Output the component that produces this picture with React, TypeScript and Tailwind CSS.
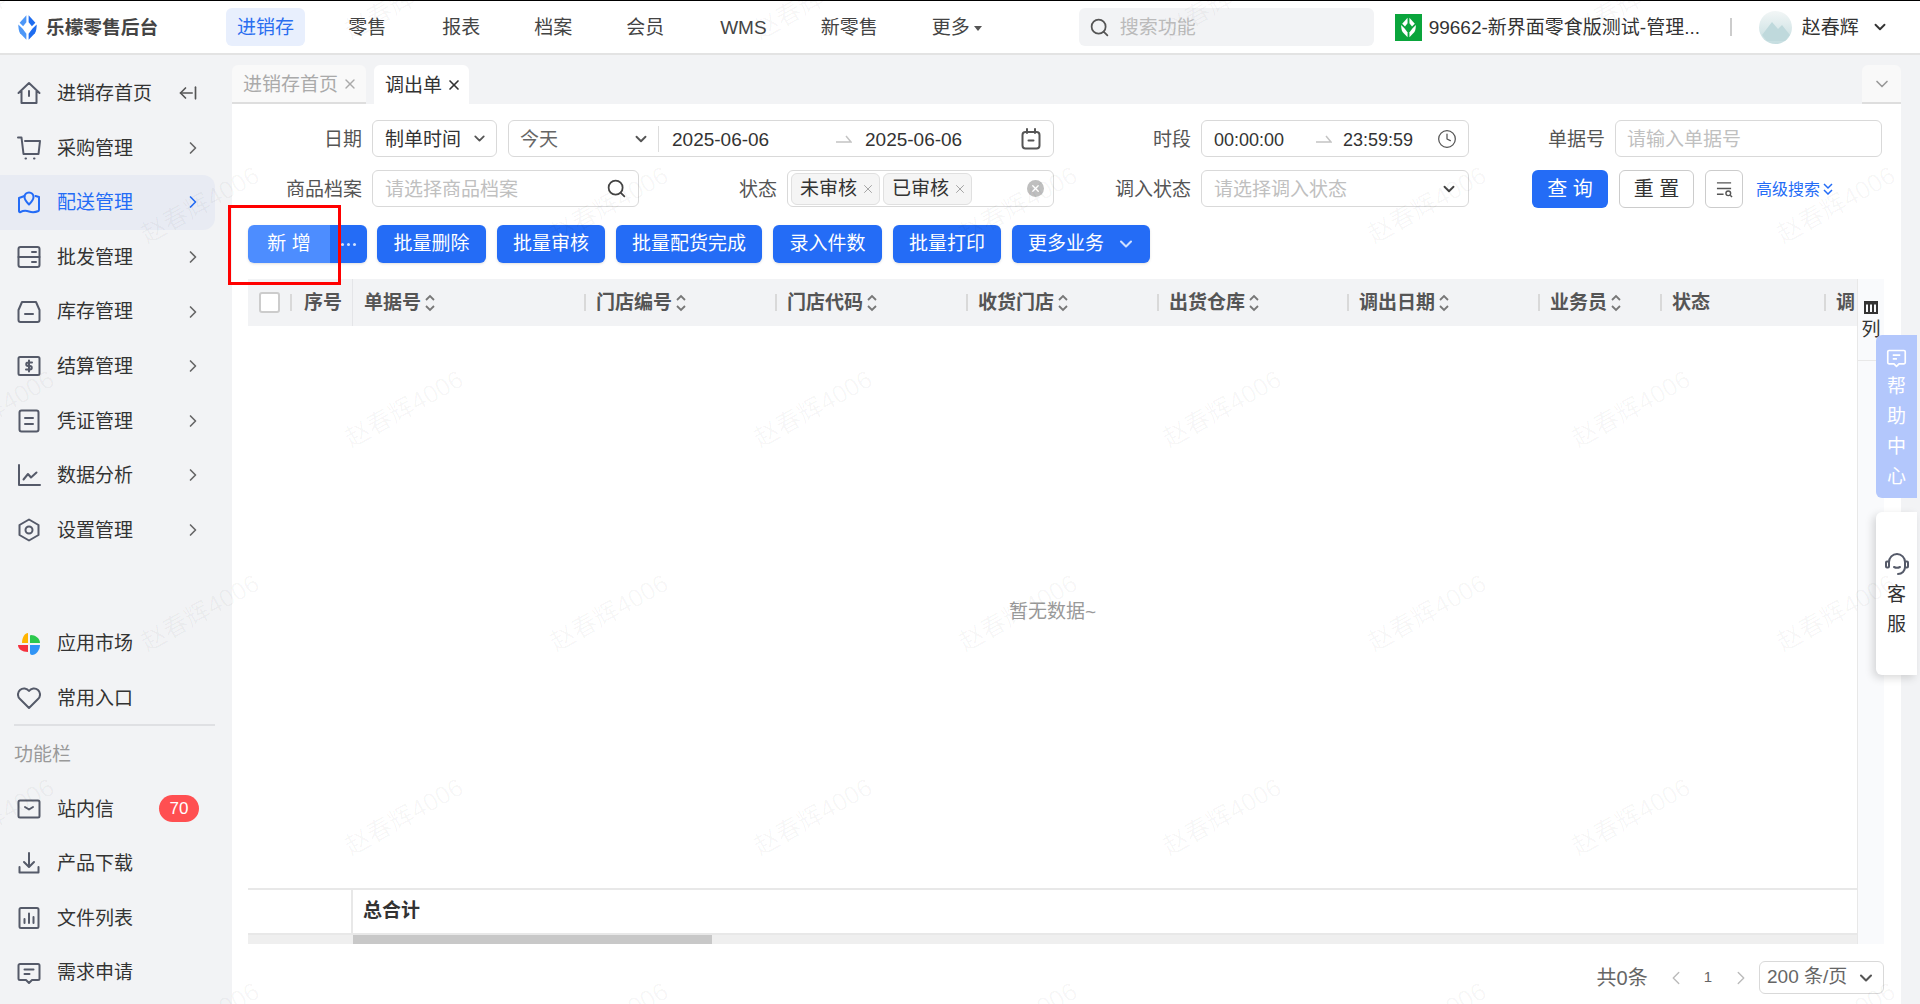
import { ReactNode } from "react";
import { ArrowLeftFromLine, ChevronDown, ChevronRight, ChevronLeft, Clock, Search, X } from "lucide-react";

const sw = { fill: "none", stroke: "currentColor", strokeWidth: 2, strokeLinecap: "round", strokeLinejoin: "round" } as const;

const Ic = ({ children, cls = "w-6 h-6" }: { children: ReactNode; cls?: string }) => (
    <svg viewBox="0 0 24 24" className={cls} {...sw}>{children}</svg>
);

const menuTop = [
    { t: "采购管理", i: <Ic><path d="M1 1.500h3.500L6.500 18h15L23 5H8" /><path d="M8.500 22.500h.5M17 22.500h.5" /></Ic> },
    { t: "配送管理", active: true, i: <Ic><path d="M7.500 6 2 8v13c0 1 .500 1.500 1.500 1 3-1.500 5.500-1.500 8.500-.500s6 1 9.500-.500c.500-.500.500-1 .500-1.500V7l-3.500-1" /><path d="M12 14.500c-3-3-4.500-5-4.500-7.500a4.500 4.500 0 0 1 9 0c0 2.500-1.500 4.500-4.500 7.500Z" /></Ic> },
    { t: "批发管理", i: <Ic><rect x="1.500" y="2" width="21" height="20" rx="2" /><path d="M1.500 12h21M15 7h4M15 17h4" /></Ic> },
    { t: "库存管理", i: <Ic><path d="M5 2h14l3.500 8v10a2 2 0 0 1-2 2h-17a2 2 0 0 1-2-2V10Z" /><path d="M8 14h8" /></Ic> },
    { t: "结算管理", i: <Ic><rect x="1.500" y="3" width="21" height="18" rx="1.500" /><path d="M15 8.500h-4a1.700 1.700 0 0 0 0 3.500h2a1.700 1.700 0 0 1 0 3.500H9M12 6.500v11" /></Ic> },
    { t: "凭证管理", i: <Ic><rect x="2.500" y="1.500" width="19" height="21" rx="2" /><path d="M8 9h8M8 15h8" /></Ic> },
    { t: "数据分析", i: <Ic><path d="M2 2v20h21" /><path d="M6.500 16.500 11 11l3 3.500 5.500-5" /></Ic> },
    { t: "设置管理", i: <Ic><path d="M12 1.500 21.500 7v10L12 22.500 2.500 17V7Z" /><circle cx="12" cy="12" r="3.500" /></Ic> },
];

const menuTools = [
    { t: "站内信", i: <Ic><rect x="1.500" y="3.500" width="21" height="17" rx="1.500" /><path d="m8 10 4 2.500 4-2.500" /></Ic> },
    { t: "产品下载", i: <Ic><path d="M12 2v13M7 11l5 5 5-5M2.500 16v5.500h19V16" /></Ic> },
    { t: "文件列表", i: <Ic><rect x="2.500" y="2" width="19" height="20" rx="1.500" /><path d="M7.500 17v-4M12 17V7.500M16.500 17v-6" /></Ic> },
    { t: "需求申请", i: <Ic><path d="M3 3h18a1.500 1.500 0 0 1 1.500 1.500v13A1.500 1.500 0 0 1 21 19h-6l-3 3-3-3H3a1.500 1.500 0 0 1-1.500-1.500v-13A1.500 1.500 0 0 1 3 3Z" /><path d="M7.500 8.500h9M7.500 13h5" /></Ic> },
];

const cols = [
    { t: "门店编号", w: "w-[191px]", s: true },
    { t: "门店代码", w: "w-[191px]", s: true },
    { t: "收货门店", w: "w-[191px]", s: true },
    { t: "出货仓库", w: "w-[190px]", s: true },
    { t: "调出日期", w: "w-[191px]", s: true },
    { t: "业务员", w: "w-[122px]", s: true },
    { t: "状态", w: "w-[164px]", s: false },
    { t: "调", w: "w-[32px]", s: false },
];

const MenuRow = ({ t, i, active, children }: { t: string; i: ReactNode; active?: boolean; children?: ReactNode }) => (
    <div className={`h-[54.6px] w-[215px] flex items-center pl-[17px] rounded-r-xl ${active ? "bg-[#e8ebf3] text-[#246cf6]" : "text-[#333]"}`}>
        <span className={active ? "text-[#246cf6]" : "text-[#555a69]"}>{i}</span>
        <span className="ml-[16px] pt-[2px] text-[19px] w-[126px] whitespace-nowrap">{t}</span>
        {children}
    </div>
);

const Sort = () => (
    <svg viewBox="0 0 10 18" className="w-[10px] h-[18px] ml-[4px] text-[#777]" fill="none" stroke="currentColor" strokeWidth="1.800">
        <path d="m1 6 4-4 4 4M1 12l4 4 4-4" />
    </svg>
);

const RangeArrow = () => (
    <svg viewBox="0 0 16 8" className="w-[16px] h-[8px] text-[#c4c4c4]" fill="none" stroke="currentColor" strokeWidth="1.500">
        <path d="M0 7h15L10 1" />
    </svg>
);

const Field = ({ w, children }: { w: string; children: ReactNode }) => (
    <div className={`${w} h-[37px] border border-[#d9d9d9] rounded-md flex items-center bg-white text-[19px] text-[#333] relative [&>span]:pt-[3px]`}>{children}</div>
);

const Label = ({ w, children }: { w: string; children: ReactNode }) => (
    <div className={`${w} text-right text-[19px] text-[#555] leading-[37px] pt-[1px] mr-[10px] whitespace-nowrap`}>{children}</div>
);

const Btn = ({ t, w }: { t: string; w: string }) => (
    <button className={`${w} h-[38px] pt-[1px] rounded-md bg-[#246cf6] text-white text-[19px] flex items-center justify-center whitespace-nowrap shadow-sm`}>{t}</button>
);

const Tag = ({ t }: { t: string }) => (
    <div className="w-[89px] h-[32px] bg-[#f5f5f5] border border-[#e0e0e0] rounded-md flex items-center pl-[8px] text-[19px] text-[#333] mr-[3px]">
        <span className="pt-[2px]">{t}</span>
        <X className="w-[14px] h-[14px] ml-[4px] text-[#999]" strokeWidth={1.500} />
    </div>
);

const Petals = ({ left, right }: { left: string; right: string }) => (
    <>
        <path d="M10.700 1 3 9.500 7 13.500 10.700 9Z" fill={left} />
        <path d="M13.300 1 21 9.500 17 13.500 13.300 9Z" fill={right} />
        <path d="M1.500 11.500 6.500 16.500 10.700 22V29L3.500 21.500C2 19 1.500 15 1.500 11.500Z" fill={left} />
        <path d="M22.500 11.500 17.500 16.500 13.300 22V29L20.500 21.500C22 19 22.500 15 22.500 11.500Z" fill={right} />
    </>
);

const marks = [-1, 0, 1, 2, 3, 4, 5].flatMap((r) =>
    [0, 1, 2, 3, 4, 5].map((c) => ({ x: (r % 2 === 0 ? 200 : 404) - 409 + c * 409, y: 205 + r * 204 }))
);

export default function App() {
    return (
        <div className="w-[1920px] h-[1004px] overflow-hidden relative bg-[#f2f3f5] font-['Liberation_Sans','Noto_Sans_CJK_SC',sans-serif]">
            <header className="h-[55px] bg-white border-t border-t-black border-b-2 border-b-[#e3e3e3] flex items-center">
                <svg viewBox="0 0 24 30" className="w-[21px] h-[27px] ml-[17px]">
                    <Petals left="#4d97f7" right="#1f6df0" />
                </svg>
                <span className="ml-[8px] pt-[2px] text-[18.700px] font-bold text-[#444] whitespace-nowrap">乐檬零售后台</span>
                <nav className="flex items-center ml-[68px] text-[19px] text-[#444] h-[38px] [&>a]:pt-[2px]">
                    <a className="w-[79px] h-[38px] rounded-md bg-[#e8effd] text-[#2a6ef0] flex items-center justify-center">进销存</a>
                    <a className="ml-[43px]">零售</a>
                    <a className="ml-[56px]">报表</a>
                    <a className="ml-[54px]">档案</a>
                    <a className="ml-[54px]">会员</a>
                    <a className="ml-[56px]">WMS</a>
                    <a className="ml-[54px]">新零售</a>
                    <a className="ml-[54px] flex items-center">更多<span className="ml-[4px] w-0 h-0 border-x-[4px] border-x-transparent border-t-[5px] border-t-[#555]" /></a>
                </nav>
                <div className="ml-[97px] w-[295px] h-[38px] bg-[#f2f3f5] rounded-md flex items-center pl-[10px] text-[19px] text-[#bbb]">
                    <Search className="w-[21px] h-[21px] text-[#555]" strokeWidth={2} />
                    <span className="ml-[10px] pt-[2px]">搜索功能</span>
                </div>
                <div className="ml-[21px] w-[27px] h-[27px] bg-[#0aa53c] flex items-center justify-center">
                    <svg viewBox="0 0 24 30" className="w-[17px] h-[21px]">
                        <Petals left="#fff" right="#fff" />
                    </svg>
                </div>
                <span className="ml-[7px] pt-[2px] w-[271px] text-[19px] text-[#333] whitespace-nowrap overflow-hidden">99662-新界面零食版测试-管理...</span>
                <span className="ml-[30px] w-[2px] h-[18px] bg-[#ccc]" />
                <svg viewBox="0 0 33 33" className="ml-[27px] w-[33px] h-[33px]">
                    <defs>
                        <linearGradient id="av" x1="0" y1="0" x2="0" y2="1">
                            <stop offset="0" stopColor="#f2f6f6" />
                            <stop offset="1" stopColor="#c5dde0" />
                        </linearGradient>
                    </defs>
                    <circle cx="16.500" cy="16.500" r="16.500" fill="url(#av)" />
                    <path d="M3 24 13 11l6 7 4-4 8 10-5 6H8Z" fill="#bfd9dc" />
                </svg>
                <span className="ml-[10px] pt-[2px] text-[19px] text-[#333] whitespace-nowrap">赵春辉</span>
                <ChevronDown className="ml-[12px] w-[18px] h-[18px] text-[#333]" strokeWidth={2.500} />
            </header>

            <div className="flex h-[949px]">
                <aside className="w-[232px] shrink-0 pt-[11px]">
                    <MenuRow t="进销存首页" i={<Ic><path d="M1.500 12 12 2l10.500 10M4.500 10v12h15V10M12 10v5" /></Ic>}>
                        <ArrowLeftFromLine className="w-[20px] h-[20px] -ml-[5px] text-[#555]" strokeWidth={2} />
                    </MenuRow>
                    {menuTop.map((m) => (
                        <MenuRow key={m.t} t={m.t} i={m.i} active={m.active}>
                            <ChevronRight className={`w-[20px] h-[20px] ${m.active ? "text-[#246cf6]" : "text-[#666]"}`} strokeWidth={2} />
                        </MenuRow>
                    ))}
                    <div className="h-[59px]" />
                    <MenuRow t="应用市场" i={
                        <svg viewBox="0 0 24 24" className="w-6 h-6">
                            <path d="M11 11H5C5 5 8 1 11 1Z" fill="#ffb400" />
                            <path d="M13 11V4c0 0 0-1 1-1 4 0 9 3 9 8Z" fill="#2cc84d" />
                            <path d="M13 13h10c0 5-4 10-8 10-1 0-2-1-2-2Z" fill="#3094f5" />
                            <path d="M11 13v7C5 20 1 17 1 13Z" fill="#f5313e" />
                        </svg>
                    } />
                    <MenuRow t="常用入口" i={<Ic><path d="M12 22 3 13a6 6 0 0 1 0-9 6 6 0 0 1 9 1 6 6 0 0 1 9-1 6 6 0 0 1 0 9Z" /></Ic>} />
                    <div className="ml-[14px] mr-[17px] -mt-[2px] border-t-2 border-[#dfe0e3]" />
                    <div className="h-[56px] pl-[14px] pt-[3px] flex items-center text-[19px] text-[#999]">功能栏</div>
                    <MenuRow t={menuTools[0].t} i={menuTools[0].i}>
                        <span className="-ml-[24px] w-[40px] h-[27px] rounded-full bg-[#ff4f51] text-white text-[17px] flex items-center justify-center">70</span>
                    </MenuRow>
                    {menuTools.slice(1).map((m) => <MenuRow key={m.t} t={m.t} i={m.i} />)}
                </aside>

                <main className="w-[1669px] shrink-0">
                    <div className="h-[49px] pt-[10px] flex relative">
                        <div className="w-[134px] h-[39px] bg-[#f9f9f9] border-b-2 border-[#dedede] rounded-t-md flex items-center pl-[11px] text-[19px] text-[#aaa]">
                            <span className="pt-[4px]">进销存首页</span><X className="w-[16px] h-[16px] ml-[4px] text-[#aaa]" strokeWidth={2} />
                        </div>
                        <div className="ml-[8px] w-[95px] h-[39px] bg-white rounded-t-md flex items-center pl-[11px] text-[19px] text-[#333]">
                            <span className="pt-[4px]">调出单</span><X className="w-[16px] h-[16px] ml-[4px] text-[#333]" strokeWidth={2.500} />
                        </div>
                        <div className="ml-auto w-[39px] h-[39px] bg-[#f9f9f9] border-b-2 border-[#dedede] rounded-t-md flex items-center justify-center">
                            <ChevronDown className="w-[20px] h-[20px] text-[#999]" strokeWidth={2} />
                        </div>
                    </div>

                    <div className="bg-white h-[900px] pt-[16px]">
                        <div className="flex">
                            <Label w="w-[130px]">日期</Label>
                            <Field w="w-[125px]">
                                <span className="ml-[12px]">制单时间</span>
                                <ChevronDown className="ml-[10px] w-[17px] h-[17px] text-[#555]" strokeWidth={2.500} />
                            </Field>
                            <div className="w-[11px]" />
                            <Field w="w-[546px]">
                                <span className="ml-[11px] w-[112px] text-[#666]">今天</span>
                                <ChevronDown className="w-[18px] h-[18px] text-[#555]" strokeWidth={2.500} />
                                <span className="ml-[8px] w-px h-[26px] bg-[#ddd]" />
                                <span className="ml-[13px] w-[164px]">2025-06-06</span>
                                <RangeArrow />
                                <span className="ml-[13px]">2025-06-06</span>
                                <svg viewBox="0 0 20 22" className="absolute right-[12px] w-[20px] h-[22px] text-[#555]" fill="none" stroke="currentColor" strokeWidth="2" strokeLinecap="round">
                                    <rect x="1.500" y="4" width="17" height="16.500" rx="3" />
                                    <path d="M6 1v4M14 1v4M7.500 12.500h5" />
                                </svg>
                            </Field>
                            <Label w="w-[137px]">时段</Label>
                            <Field w="w-[268px]">
                                <span className="ml-[12px] w-[102px] text-[18px]">00:00:00</span>
                                <RangeArrow />
                                <span className="ml-[11px] text-[18px]">23:59:59</span>
                                <Clock className="absolute right-[11px] w-[20px] h-[20px] text-[#555]" strokeWidth={1.500} />
                            </Field>
                            <Label w="w-[136px]">单据号</Label>
                            <Field w="w-[267px]"><span className="ml-[11px] text-[#c0c0c0]">请输入单据号</span></Field>
                        </div>

                        <div className="flex mt-[12px]">
                            <Label w="w-[130px]">商品档案</Label>
                            <Field w="w-[267px]">
                                <span className="ml-[12px] text-[#c0c0c0]">请选择商品档案</span>
                                <Search className="absolute right-[11px] w-[21px] h-[21px] text-[#444]" strokeWidth={2} />
                            </Field>
                            <Label w="w-[138px]">状态</Label>
                            <Field w="w-[267px]">
                                <div className="ml-[3px] flex"><Tag t="未审核" /><Tag t="已审核" /></div>
                                <span className="absolute right-[9px] top-[9px] !pt-0 w-[17px] h-[17px] rounded-full bg-[#bfbfbf] flex items-center justify-center">
                                    <X className="w-[11px] h-[11px] text-white" strokeWidth={3} />
                                </span>
                            </Field>
                            <Label w="w-[137px]">调入状态</Label>
                            <Field w="w-[268px]">
                                <span className="ml-[12px] text-[#c0c0c0]">请选择调入状态</span>
                                <ChevronDown className="absolute right-[10px] w-[18px] h-[18px] text-[#444]" strokeWidth={2.500} />
                            </Field>
                            <button className="ml-[63px] w-[76px] h-[38px] rounded-md bg-[#246cf6] text-white text-[20px]">查 询</button>
                            <button className="ml-[11px] w-[75px] h-[38px] rounded-md border border-[#ccc] bg-white text-[#333] text-[20px]">重 置</button>
                            <button className="ml-[11px] w-[38px] h-[38px] rounded-md border border-[#ccc] bg-white flex items-center justify-center text-[#555]">
                                <svg viewBox="0 0 18 18" className="w-[17px] h-[17px]" fill="none" stroke="currentColor" strokeWidth="1.500">
                                    <path d="M1 2h15M1 8h15M1 14h7" />
                                    <circle cx="13" cy="13" r="2.500" />
                                    <path d="m15 15 2 2" />
                                </svg>
                            </button>
                            <a className="ml-[13px] text-[16px] leading-[37px] text-[#246cf6] flex items-center whitespace-nowrap">
                                高级搜索
                                <svg viewBox="0 0 10 12" className="w-[10px] h-[12px] ml-[3px]" fill="none" stroke="currentColor" strokeWidth="1.500"><path d="m1 1 4 4 4-4M1 7l4 4 4-4" /></svg>
                            </a>
                        </div>

                        <div className="flex mt-[17px] ml-[16px]">
                            <div className="flex w-[119px] h-[38px] rounded-md overflow-hidden text-white shadow-sm">
                                <div className="w-[82px] pt-[1px] bg-[#4d8dff] flex items-center justify-center text-[19px]">新 增</div>
                                <div className="w-[37px] bg-[#246cf6] flex items-center justify-center gap-[3px]">
                                    <span className="w-[3px] h-[3px] rounded-full bg-[#cfe0ff]" />
                                    <span className="w-[3px] h-[3px] rounded-full bg-[#cfe0ff]" />
                                    <span className="w-[3px] h-[3px] rounded-full bg-[#cfe0ff]" />
                                </div>
                            </div>
                            <div className="ml-[10px] flex gap-[11px]">
                                <Btn t="批量删除" w="w-[109px]" />
                                <Btn t="批量审核" w="w-[108px]" />
                                <Btn t="批量配货完成" w="w-[146px]" />
                                <Btn t="录入件数" w="w-[109px]" />
                                <Btn t="批量打印" w="w-[108px]" />
                                <button className="w-[138px] h-[38px] rounded-md bg-[#246cf6] text-white text-[19px] flex items-center pl-[16px] shadow-sm">
                                    <span className="pt-[1px]">更多业务</span><ChevronDown className="ml-[12px] w-[20px] h-[20px] text-[#cfe0ff]" strokeWidth={2.500} />
                                </button>
                            </div>
                        </div>

                        <div className="flex mt-[16px] ml-[16px] h-[665px]">
                            <div className="w-[1609px] flex flex-col">
                                <div className="h-[47px] bg-[#f2f3f5] flex items-center text-[19px] font-bold text-[#555] overflow-hidden shrink-0">
                                    <div className="w-[105px] h-full border-r border-[#e4e5e8] flex items-center pl-[11px] shrink-0">
                                        <span className="w-[21px] h-[21px] border-2 border-[#ccc] rounded-[3px] bg-white" />
                                        <span className="ml-[10px] w-[2px] h-[17px] bg-[#d9d9d9]" />
                                        <span className="ml-[12px] pt-[1px]">序号</span>
                                    </div>
                                    <div className="w-[231px] pl-[11px] flex items-center shrink-0"><span className="pt-[1px]">单据号</span><Sort /></div>
                                    {cols.map((c) => (
                                        <div key={c.t} className={`${c.w} flex items-center shrink-0 overflow-hidden whitespace-nowrap`}>
                                            <span className="w-[2px] h-[17px] bg-[#d9d9d9]" />
                                            <span className="ml-[10px] pt-[1px]">{c.t}</span>
                                            {c.s && <Sort />}
                                        </div>
                                    ))}
                                </div>
                                <div className="flex-1 flex items-center justify-center text-[19px] text-[#999] pt-[10px]">暂无数据~</div>
                                <div className="h-[47px] border-y-2 border-[#e8e8e8] flex shrink-0">
                                    <div className="w-[105px] border-r-2 border-[#e8e8e8]" />
                                    <div className="pl-[10px] flex items-center text-[19px] font-bold text-[#333]">总合计</div>
                                </div>
                                <div className="h-[9px] bg-[#efefef] pl-[105px] shrink-0">
                                    <div className="w-[359px] h-full bg-[#c8c8c8]" />
                                </div>
                            </div>
                            <div className="w-[27px] bg-[#f9fafc] border-l border-[#e8e8e8] overflow-hidden">
                                <div className="h-[82px] border-b border-[#e8e8e8] pt-[22px] flex flex-col items-center">
                                    <svg viewBox="0 0 14 13" className="w-[14px] h-[13px] text-[#333]" fill="none" stroke="currentColor" strokeWidth="2">
                                        <path d="M1 1h12v11H1ZM5 3v9M9 3v9M1 2.500h12" />
                                    </svg>
                                    <span className="text-[19px] leading-[28px] pt-[2px] text-[#333]">列</span>
                                </div>
                            </div>
                        </div>

                        <div className="flex items-center mt-[17px] pr-[17px] justify-end text-[#666]">
                            <span className="text-[20px]">共0条</span>
                            <ChevronLeft className="ml-[17px] w-[22px] h-[22px] text-[#bbb]" strokeWidth={1.500} />
                            <span className="ml-[17px] text-[15px]">1</span>
                            <ChevronRight className="ml-[18px] w-[22px] h-[22px] text-[#bbb]" strokeWidth={1.500} />
                            <div className="ml-[7px] w-[125px] h-[33px] border border-[#d9d9d9] rounded-md flex items-center pl-[7px] text-[19px]">
                                200 条/页
                                <ChevronDown className="ml-[9px] w-[20px] h-[20px] text-[#555]" strokeWidth={2.500} />
                            </div>
                        </div>
                    </div>
                </main>
            </div>

            <div className="absolute left-[1876px] top-[335px] w-[41px] h-[163px] bg-[#b3c7fc] rounded-l-md flex flex-col items-center pt-[13px] text-white text-[19px] leading-[30px]">
                <svg viewBox="0 0 24 24" className="w-[21px] h-[20px] mb-[4px]" fill="none" stroke="currentColor" strokeWidth="2" strokeLinejoin="round">
                    <path d="M3 3h18a1.500 1.500 0 0 1 1.500 1.500v13A1.500 1.500 0 0 1 21 19h-6l-3 3-3-3H3a1.500 1.500 0 0 1-1.500-1.500v-13A1.500 1.500 0 0 1 3 3Z" />
                    <path d="M7.500 8.500h9M7.500 13h5" />
                </svg>
                <span>帮</span><span>助</span><span>中</span><span>心</span>
            </div>
            <div className="absolute left-[1876px] top-[512px] w-[41px] h-[163px] bg-white rounded-l-md shadow-[-3px_3px_8px_rgba(0,0,0,0.15)] flex flex-col items-center pt-[40px] text-[#333] text-[19px] leading-[30px]">
                <svg viewBox="0 0 24 24" className="w-[24px] h-[24px] mb-[4px] text-[#555a69]" fill="none" stroke="currentColor" strokeWidth="2" strokeLinecap="round">
                    <path d="M4 10a8 8 0 0 1 16 0v5c0 4-3 7-7 7" />
                    <rect x="1" y="9.500" width="3" height="6" rx="1" />
                    <rect x="20" y="9.500" width="3" height="6" rx="1" />
                    <path d="M9 15c2 1 4 1 6 0" />
                </svg>
                <span>客</span><span>服</span>
            </div>

            <div className="absolute left-[228px] top-[205px] w-[113px] h-[80px] border-[3px] border-[#ff0000] pointer-events-none" />

            <div className="absolute inset-0 overflow-hidden pointer-events-none">
                {marks.map((m) => (
                    <span
                        key={`${m.x}-${m.y}`}
                        className="absolute text-[25px] text-black/[0.035] whitespace-nowrap -rotate-[29deg] -translate-x-1/2 -translate-y-1/2"
                        style={{ left: m.x, top: m.y }}
                    >
                        赵春辉4006
                    </span>
                ))}
            </div>
        </div>
    );
}
